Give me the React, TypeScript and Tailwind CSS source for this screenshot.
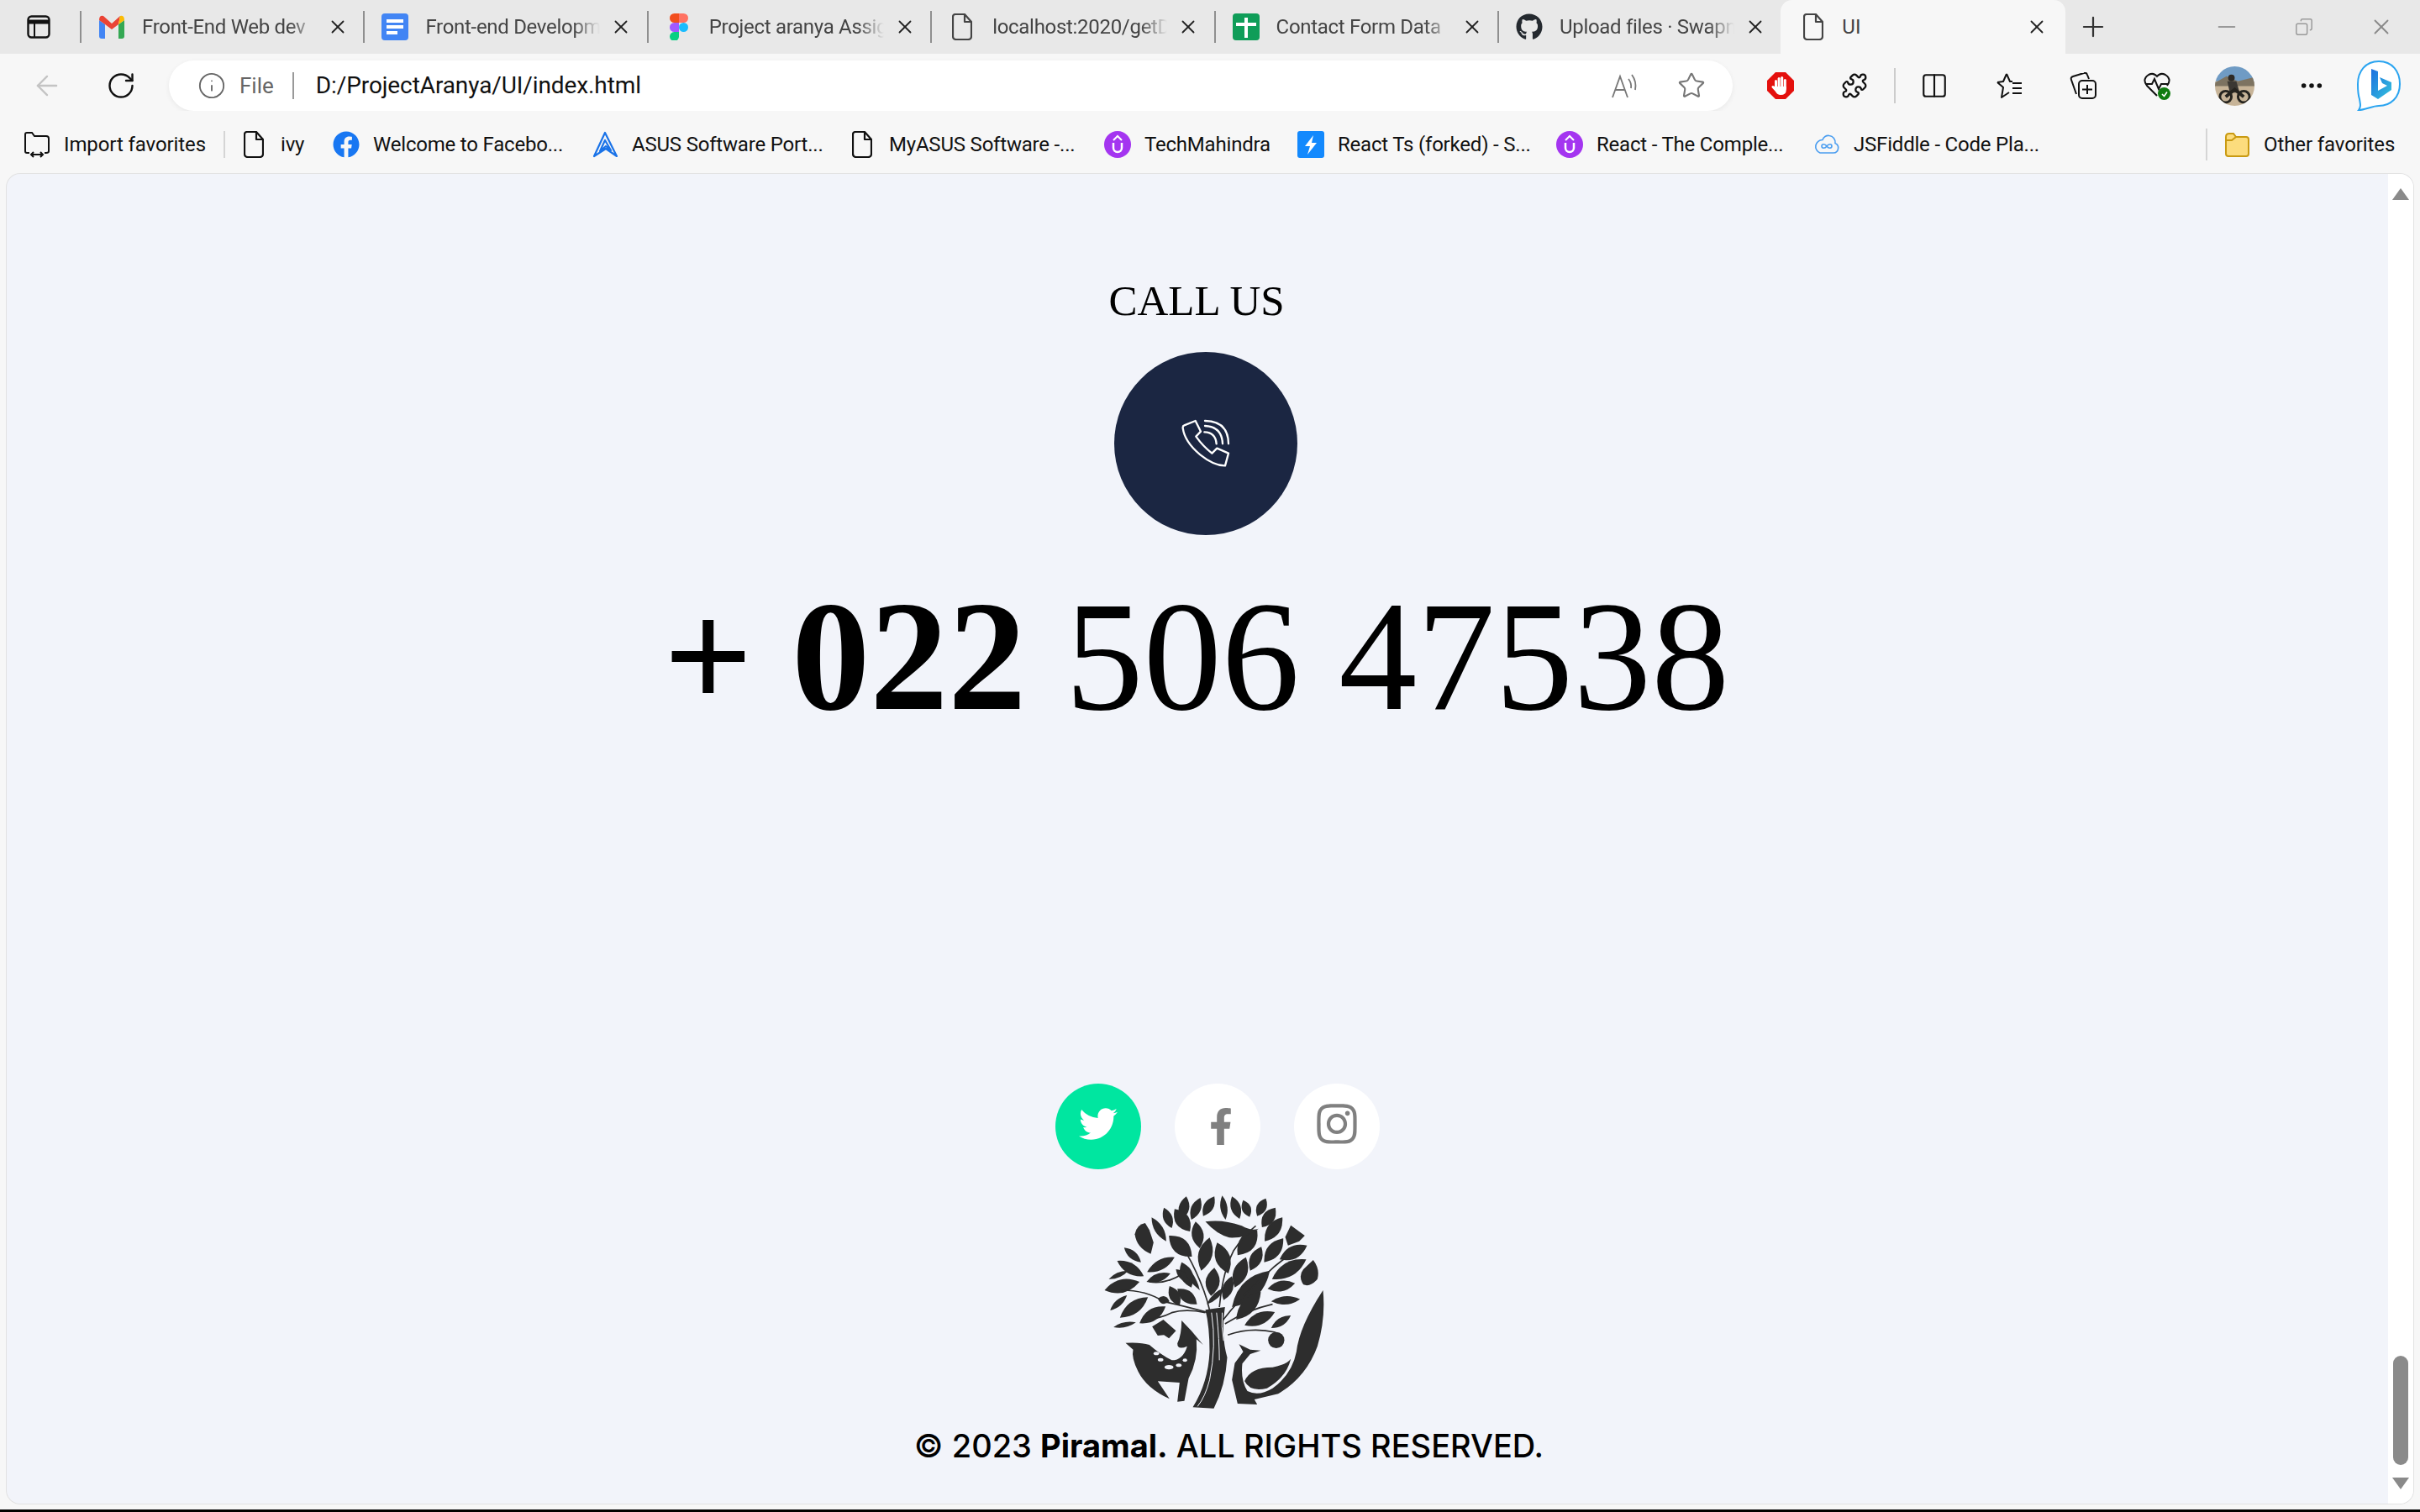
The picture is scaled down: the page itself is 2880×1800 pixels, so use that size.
import React from 'react';
import {
  ArrowLeft,
  RotateCw,
  Info,
  Star,
  Puzzle,
  Columns2,
  Minus,
  Plus,
  X,
  Copy,
  MoreHorizontal,
} from 'lucide-react';
import { FaFacebookF, FaFacebook, FaGithub, FaInstagram, FaTwitter } from 'react-icons/fa';

const uiFont = { fontFamily: 'Roboto, sans-serif' };

const GmailIcon = () => (
  <svg viewBox="0 0 30 28" className="h-[28px] w-[30px]">
    <path d="M0 6 L0 25 Q0 28 3 28 L7 28 L7 11 Z" fill="#4285f4" />
    <path d="M30 6 L30 25 Q30 28 27 28 L23 28 L23 11 Z" fill="#34a853" />
    <path d="M0 6 Q0 0 5 1 L15 10 L25 1 L23 11 L15 17 L7 11 Z" fill="#ea4335" />
    <path d="M25 1 Q30 0 30 6 L23 11 Z" fill="#fbbc04" />
  </svg>
);

const DocsIcon = () => (
  <svg viewBox="0 0 32 32" className="h-[32px] w-[32px]">
    <rect width="32" height="32" rx="4" fill="#4285f4" />
    <rect x="6" y="7" width="20" height="4" fill="#fff" />
    <rect x="6" y="14" width="20" height="4" fill="#fff" />
    <rect x="6" y="21" width="13" height="4" fill="#fff" />
  </svg>
);

const FigmaIcon = () => (
  <svg viewBox="0 0 22 32" className="h-[32px] w-[22px]">
    <path d="M11 0 H5.5 a5.5 5.5 0 0 0 0 11 H11 Z" fill="#f24e1e" />
    <path d="M11 0 h5.5 a5.5 5.5 0 0 1 0 11 H11 Z" fill="#ff7262" />
    <path d="M11 11 H5.5 a5.5 5.5 0 0 0 0 11 H11 Z" fill="#a259ff" />
    <circle cx="16.5" cy="16.5" r="5.5" fill="#1abcfe" />
    <path d="M11 22 H5.5 a5.5 5.5 0 1 0 5.5 5 Z" fill="#0acf83" />
  </svg>
);

const SheetsIcon = () => (
  <svg viewBox="0 0 32 32" className="h-[32px] w-[32px]">
    <rect width="32" height="32" rx="4" fill="#0f9d58" />
    <rect x="14" y="5" width="4" height="24" fill="#fff" />
    <rect x="4" y="11" width="24" height="4" fill="#fff" />
  </svg>
);

const UdemyIcon = () => (
  <svg viewBox="0 0 32 32" className="h-[32px] w-[32px]">
    <circle cx="16" cy="16" r="16" fill="#a435f0" />
    <path d="M11 14 V20 a5 5 0 0 0 10 0 V14" fill="none" stroke="#fff" strokeWidth="2.5" />
    <path d="M11 11 L16 6 L21 11" fill="none" stroke="#fff" strokeWidth="2" />
  </svg>
);

const AsusIcon = () => (
  <svg viewBox="0 0 32 32" className="h-[32px] w-[32px]">
    <path
      d="M16 2 L30 30 L17 21 L3 30 Z M16 11 L10 24 L17 18 L23 23 Z"
      fill="none"
      stroke="#1a73e8"
      strokeWidth="2.2"
      strokeLinejoin="round"
    />
  </svg>
);

const BoltIcon = () => (
  <svg viewBox="0 0 32 32" className="h-[32px] w-[32px]">
    <rect width="32" height="32" rx="3" fill="#1389fd" />
    <path d="M19 5 L9 18 H15 L12 28 L23 14 H17 Z" fill="#fff" />
  </svg>
);

const FiddleIcon = () => (
  <svg viewBox="0 0 32 32" className="h-[32px] w-[32px]">
    <path
      d="M8 26 H24 a6 6 0 0 0 2 -11.5 a8 8 0 0 0 -7 -9 a7 7 0 0 0 -8 5 a8 8 0 0 0 -3 15.5 Z"
      fill="none"
      stroke="#4a9df0"
      strokeWidth="1.6"
    />
    <path
      d="M16 18 c-2 -3 -6 -3 -6 0 s4 3 6 0 s6 -3 6 0 s-4 3 -6 0 Z"
      fill="none"
      stroke="#4a9df0"
      strokeWidth="1.6"
    />
  </svg>
);

const FolderIcon = () => (
  <svg viewBox="0 0 32 32" className="h-[32px] w-[32px]">
    <path
      d="M3 7 Q3 3 7 3 H12 L15 7 H27 Q30 7 30 10 V27 Q30 30 27 30 H6 Q3 30 3 27 Z"
      fill="#fcdc7d"
      stroke="#c99a12"
      strokeWidth="2"
    />
    <path d="M3 11 H10 L15 7" fill="none" stroke="#c99a12" strokeWidth="2" />
  </svg>
);

const ImportIcon = () => (
  <svg viewBox="0 0 32 32" className="h-[32px] w-[32px]" fill="none" stroke="#111" strokeWidth="2">
    <path d="M7 26 H4 Q2 26 2 24 V4 Q2 2 4 2 H10 L13 6 H27 Q30 6 30 9 V24 Q30 26 27 26 H25" />
    <path d="M9 28 H23 M12 25 L9 28 L12 31 M20 25 L23 28 L20 31" />
  </svg>
);

const PageIcon = ({ color = '#111' }: { color?: string }) => (
  <svg viewBox="0 0 24 32" className="h-[32px] w-[24px]" fill="none" stroke={color} strokeWidth="2.2">
    <path d="M4 1 H15 L23 10 V27 Q23 31 19 31 H5 Q1 31 1 27 V4 Q1 1 4 1 Z M15 1 V10 H23" strokeLinejoin="round" />
  </svg>
);

const ReadAloudIcon = () => (
  <svg viewBox="0 0 32 30" className="h-[30px] w-[32px]" fill="none" stroke="#777" strokeWidth="1.8">
    <path d="M2 29 L11 4 L20 29 M5 20 H17" />
    <path d="M21 7 Q25 12 24 18 M25 2 Q31 10 29 20" />
  </svg>
);

const AdBlockIcon = () => (
  <svg viewBox="0 0 32 32" className="h-[32px] w-[32px]">
    <path d="M10 0 H22 L32 10 V22 L22 32 H10 L0 22 V10 Z" fill="#e4100d" />
    <g fill="#fff">
      <rect x="9" y="9" width="3" height="12" rx="1.5" />
      <rect x="12.6" y="6" width="3" height="14" rx="1.5" />
      <rect x="16.2" y="5" width="3" height="15" rx="1.5" />
      <rect x="19.8" y="8" width="3" height="13" rx="1.5" />
      <path d="M9 17 H22.8 V21 Q22.8 27 16 27 Q12 27 10 23 L5.5 18 Q5 16 7 16 Z" />
    </g>
  </svg>
);

const FavListIcon = () => (
  <svg viewBox="0 0 32 32" className="h-[32px] w-[32px]" fill="none" stroke="#111" strokeWidth="2">
    <path d="M13 2 L17 11 H20 M2 12 L9 18 L7 30 L16 24 M13 2 L9 11 L2 12" strokeLinejoin="round" />
    <path d="M20 13 H31 M20 19 H31 M20 25 H31" />
  </svg>
);

const CollectionsIcon = () => (
  <svg viewBox="0 0 32 32" className="h-[32px] w-[32px]" fill="none" stroke="#111" strokeWidth="2">
    <path d="M8 26 L2 9 Q1 6 4 5 L17 1 Q20 0 21 3 L23 8" />
    <rect x="11" y="10" width="20" height="21" rx="4" />
    <path d="M21 15 V26 M15 20.5 H27" />
  </svg>
);

const HeartIcon = () => (
  <div className="relative h-[34px] w-[32px]">
    <svg viewBox="0 0 32 32" className="h-[32px] w-[32px]" fill="none" stroke="#111" strokeWidth="2">
      <path d="M16 29 L4 17 Q-2 9 6 4 Q12 1 16 6 Q20 1 26 4 Q34 9 28 17" />
      <path d="M2 15 H10 L13 9 L18 21 L21 15 H30" />
    </svg>
    <span className="absolute bottom-0 right-0 flex h-[15px] w-[15px] items-center justify-center rounded-full bg-[#107c10]">
      <svg viewBox="0 0 10 10" className="h-[10px] w-[10px]" fill="none" stroke="#fff" strokeWidth="1.6">
        <path d="M2 5 L4.5 7.5 L8 2.5" />
      </svg>
    </span>
  </div>
);

const Avatar = () => (
  <svg viewBox="0 0 48 48" className="h-[47px] w-[47px]">
    <defs>
      <clipPath id="avatar-clip">
        <circle cx="24" cy="24" r="24" />
      </clipPath>
    </defs>
    <g clipPath="url(#avatar-clip)">
      <rect width="48" height="20" fill="#6f9bc4" />
      <rect y="18" width="48" height="30" fill="#c7b498" />
      <path d="M0 20 L14 12 L28 18 L48 13 V24 H0 Z" fill="#7d7361" />
      <circle cx="20" cy="14" r="4" fill="#2d2a26" />
      <path d="M15 18 H26 L30 32 H18 Z" fill="#3b3833" />
      <circle cx="13" cy="37" r="7" fill="none" stroke="#26241f" strokeWidth="3" />
      <circle cx="35" cy="37" r="7" fill="none" stroke="#26241f" strokeWidth="3" />
      <path d="M13 37 L24 28 L35 37" fill="none" stroke="#26241f" strokeWidth="4" />
    </g>
  </svg>
);

const BingIcon = () => (
  <svg viewBox="0 0 52 60" className="h-[60px] w-[52px]">
    <defs>
      <linearGradient id="bing-g" x1="0" y1="0" x2="1" y2="1">
        <stop offset="0" stopColor="#1b6fe0" />
        <stop offset="1" stopColor="#35c3dc" />
      </linearGradient>
    </defs>
    <path
      d="M26 1 C42 1 51 13 51 28 C51 44 40 54 26 54 C18 54 10 59 2 59 C5 55 4 52 3 46 C1 40 1 34 1 28 C1 13 10 1 26 1 Z"
      fill="#fff"
      stroke="#2aa4f0"
      strokeWidth="2"
    />
    <path d="M17 10 L25 13 V36 L36 30 L30 27 L27 20 L41 26 V35 L25 46 L17 41 Z" fill="url(#bing-g)" />
  </svg>
);

const tabs = [
  { title: 'Front-End Web dev', icon: <GmailIcon /> },
  { title: 'Front-end Developm', icon: <DocsIcon /> },
  { title: 'Project aranya Assig', icon: <FigmaIcon /> },
  { title: 'localhost:2020/getD', icon: <PageIcon color="#444" /> },
  { title: 'Contact Form Data', icon: <SheetsIcon /> },
  { title: 'Upload files · Swapn', icon: <FaGithub className="h-[32px] w-[32px] text-[#24292f]" /> },
];

const bookmarks = [
  { label: 'ivy', icon: <PageIcon />, width: 'w-[110px]' },
  { label: 'Welcome to Facebo...', icon: <FaFacebook className="h-[32px] w-[32px] text-[#1877f2]" />, width: 'w-[308px]' },
  { label: 'ASUS Software Port...', icon: <AsusIcon />, width: 'w-[306px]' },
  { label: 'MyASUS Software -...', icon: <PageIcon />, width: 'w-[304px]' },
  { label: 'TechMahindra', icon: <UdemyIcon />, width: 'w-[230px]' },
  { label: 'React Ts (forked) - S...', icon: <BoltIcon />, width: 'w-[308px]' },
  { label: 'React - The Comple...', icon: <UdemyIcon />, width: 'w-[306px]' },
  { label: 'JSFiddle - Code Pla...', icon: <FiddleIcon />, width: 'w-[300px]' },
];

// x1, y1, x2, y2, width: every leaf of the tree, base to tip
const leaves: number[][] = [
  [555, 548, 572, 465, 30], [590, 548, 622, 470, 28], [632, 535, 672, 465, 28], [712, 548, 700, 462, 20],
  [762, 545, 735, 465, 28], [798, 538, 775, 478, 26], [825, 535, 856, 472, 28], [520, 578, 492, 505, 26],
  [500, 625, 448, 540, 24], [585, 590, 530, 510, 40], [592, 680, 510, 605, 44], [620, 650, 605, 555, 34],
  [842, 575, 890, 505, 34], [852, 625, 915, 540, 36], [755, 675, 825, 585, 46], [850, 700, 918, 615, 38],
  [800, 730, 840, 645, 34], [905, 690, 1003, 640, 36], [878, 760, 1000, 690, 40], [625, 730, 655, 612, 40],
  [722, 740, 682, 630, 42], [745, 790, 785, 682, 40], [660, 820, 672, 720, 40], [705, 835, 735, 750, 30],
  [735, 860, 870, 730, 52], [750, 905, 838, 805, 40], [780, 925, 888, 878, 34], [862, 795, 960, 775, 30],
  [875, 840, 978, 832, 24], [875, 935, 945, 890, 22], [590, 790, 555, 700, 36], [620, 800, 555, 700, 18],
  [580, 770, 535, 725, 20], [610, 850, 540, 795, 34], [548, 855, 512, 785, 30], [432, 735, 530, 682, 28],
  [420, 750, 325, 695, 30], [410, 700, 350, 648, 22], [280, 800, 405, 770, 38], [295, 760, 365, 730, 14],
  [300, 872, 360, 818, 18], [335, 898, 435, 825, 34], [405, 918, 498, 858, 34], [470, 830, 512, 840, 22],
  [312, 932, 392, 915, 14], [430, 770, 515, 740, 24], [645, 850, 710, 790, 16],
];

const leafPath = ([x1, y1, x2, y2, w]: number[]) => {
  const mx = (x1 + x2) / 2;
  const my = (y1 + y2) / 2;
  const len = Math.hypot(x2 - x1, y2 - y1);
  const nx = ((y2 - y1) / len) * w * 1.25;
  const ny = (-(x2 - x1) / len) * w * 1.25;
  return `M${x1} ${y1} Q${mx + nx} ${my + ny} ${x2} ${y2} Q${mx - nx} ${my - ny} ${x1} ${y1} Z`;
};

const TreeLogo = () => (
  <svg viewBox="270 455 800 780" className="ml-[40px] mt-[29px] h-[260px] w-[267px] shrink-0" fill="#2d2d2d">
    {leaves.map((leaf, i) => (
      <path key={i} d={leafPath(leaf)} />
    ))}
    {/* tulips and fruit */}
    <path d="M445 670 Q395 650 388 600 Q395 565 425 560 L440 585 L455 630 Z" />
    <path d="M640 555 Q700 545 770 570 Q805 590 830 580 Q790 615 725 612 Q680 600 640 555 Z" />
    <path d="M925 610 L945 568 L995 605 L975 625 L935 640 Z" />
    <path d="M1025 692 Q1050 725 1040 760 Q1015 790 990 780 Q970 750 990 725 Z" />
    <path d="M450 930 L490 905 L535 945 L510 972 L492 960 L470 962 Z" />
    <circle cx="893" cy="978" r="29" />
    {/* trunk and branches */}
    <path d="M595 1218 Q650 1130 655 1020 Q655 930 640 870 L710 860 Q695 960 718 1040 Q712 1140 670 1222 Z" />
    <g fill="none" stroke="#2d2d2d" strokeWidth="5">
      <path d="M660 900 Q650 820 590 700 Q560 640 520 610" />
      <path d="M650 880 Q580 860 490 840 Q430 800 340 800" />
      <path d="M640 880 Q570 865 520 880 Q480 900 430 905" />
      <path d="M700 910 Q770 820 860 740 Q920 680 990 650" />
      <path d="M710 920 Q790 870 880 850" />
      <path d="M720 960 Q800 930 890 950" />
      <path d="M690 860 Q700 740 740 660 Q780 600 820 570" />
      <path d="M440 770 Q500 780 560 740" />
    </g>
    <g fill="none" stroke="#f2f4fa" strokeWidth="3">
      <path d="M662 880 Q680 1000 655 1120 Q640 1180 612 1215" />
      <path d="M680 880 Q690 980 690 1050" />
      <path d="M700 880 Q696 930 705 980" />
    </g>
    {/* deer */}
    <path d="M355 988 Q410 985 440 995 Q480 1030 520 1050 Q560 1050 575 1000 Q540 1015 540 990 Q555 960 555 908 L590 945 L632 995 L608 975 Q615 1050 580 1115 L565 1195 L540 1198 L548 1130 L470 1125 L512 1188 Q430 1150 400 1090 Q375 1040 382 1012 Z" />
    <g fill="#f2f4fa">
      <ellipse cx="465" cy="1026" rx="10" ry="6" />
      <ellipse cx="480" cy="1048" rx="10" ry="6" />
      <ellipse cx="510" cy="1075" rx="16" ry="8" />
      <ellipse cx="545" cy="1068" rx="10" ry="6" />
      <ellipse cx="567" cy="1050" rx="8" ry="6" />
    </g>
    {/* bird and the crescent round it */}
    <path d="M760 993 L800 1012 L838 1015 L800 1028 L772 1062 Q765 1120 790 1160 Q830 1180 880 1150 Q950 1100 965 1020 Q975 930 1060 800 Q1070 900 1040 1000 Q1000 1110 900 1170 L815 1190 L825 1208 L755 1205 L735 1120 L745 1060 L775 1020 Z" />
    <path d="M780 1125 Q800 1075 880 1075 Q930 1065 945 1045 Q930 1110 860 1150 Q800 1165 780 1125 Z" />
  </svg>
);

const PhoneGlyph = () => (
  <svg
    viewBox="375 595 180 180"
    className="h-[60px] w-[60px]"
    fill="none"
    stroke="#fff"
    strokeWidth="7"
    strokeLinecap="round"
    strokeLinejoin="round"
  >
    <path d="M388 620 L428 604 L447 642 L430 660 Q455 695 487 720 L505 702 L546 720 L534 764 Q495 765 445 725 Q390 680 383 630 Q382 622 388 620 Z" />
    <path d="M462 604 Q545 605 546 686" />
    <path d="M462 622 Q523 625 525 686" />
    <path d="M460 644 Q500 645 503 686" />
  </svg>
);

export default function App() {
  return (
    <div className="flex h-screen w-full flex-col overflow-hidden bg-black" style={uiFont}>
      {/* tab strip */}
      <div className="flex h-[64px] shrink-0 items-center bg-[#e8e8e8]">
        <div className="flex w-[95px] shrink-0 justify-center pr-[3px]">
          <svg viewBox="0 0 28 28" className="h-[28px] w-[28px]" fill="none" stroke="#111" strokeWidth="2.4">
            <rect x="1.5" y="1.5" width="25" height="25" rx="4" />
            <path d="M1.5 8 H26.5" strokeWidth="5" />
            <path d="M9 8 V26" strokeWidth="2" />
          </svg>
        </div>
        {tabs.map((tab) => (
          <div key={tab.title} className="flex h-[38px] w-[337.4px] shrink-0 items-center border-l-2 border-[#8f8f8f] pl-[20px]">
            <div className="flex w-[32px] shrink-0 justify-center">{tab.icon}</div>
            <span className="ml-[20px] w-[208px] shrink-0 overflow-hidden whitespace-nowrap text-[24px] tracking-[-0.3px] text-[#444] [mask-image:linear-gradient(to_right,black_85%,transparent)]">
              {tab.title}
            </span>
            <X className="ml-[12px] h-[26px] w-[26px] shrink-0 text-[#222]" strokeWidth={1.7} />
          </div>
        ))}
        <div className="flex h-[64px] w-[339px] shrink-0 items-center rounded-t-[14px] bg-[#f7f7f7] pl-[27px]">
          <PageIcon color="#444" />
          <span className="ml-[22px] w-[219px] text-[24px] text-[#444]">UI</span>
          <X className="h-[26px] w-[26px] text-[#222]" strokeWidth={1.7} />
        </div>
        <Plus className="ml-[14px] h-[38px] w-[38px] text-[#333]" strokeWidth={1.4} />
        <Minus className="ml-[124px] h-[32px] w-[32px] text-[#999]" strokeWidth={1.5} />
        <Copy className="ml-[65px] h-[22px] w-[22px] -scale-x-100 text-[#999]" strokeWidth={1.6} />
        <X className="ml-[66px] h-[30px] w-[30px] text-[#8a8a8a]" strokeWidth={1.5} />
      </div>

      {/* address row */}
      <div className="flex h-[68px] shrink-0 items-center bg-[#f7f7f7] pt-[8px]">
        <ArrowLeft className="ml-[37px] h-[38px] w-[38px] text-[#c4c4c4]" strokeWidth={1.5} />
        <RotateCw className="ml-[51px] h-[36px] w-[36px] text-[#111]" strokeWidth={1.6} />
        <div className="ml-[39px] flex h-[60px] w-[1861px] shrink-0 items-center rounded-full bg-white pl-[34px] shadow-[0_2px_6px_rgba(0,0,0,0.06)]">
          <Info className="h-[34px] w-[34px] text-[#666]" strokeWidth={1.3} />
          <span className="ml-[16px] text-[26px] text-[#666]">File</span>
          <span className="ml-[22px] h-[32px] w-[2px] bg-[#999]" />
          <span className="ml-[26px] text-[28px] tracking-[-0.1px] text-[#111]">D:/ProjectAranya/UI/index.html</span>
          <span className="ml-auto">
            <ReadAloudIcon />
          </span>
          <Star className="ml-[47px] mr-[32px] h-[34px] w-[34px] text-[#777]" strokeWidth={1.5} />
        </div>
        <div className="ml-[41px]">
          <AdBlockIcon />
        </div>
        <Puzzle className="ml-[56px] h-[32px] w-[32px] text-[#111]" strokeWidth={1.7} />
        <span className="ml-[31px] h-[42px] w-[2px] bg-[#ccc]" />
        <Columns2 className="ml-[29px] h-[34px] w-[34px] text-[#111]" strokeWidth={1.5} />
        <div className="ml-[56px]">
          <FavListIcon />
        </div>
        <div className="ml-[56px]">
          <CollectionsIcon />
        </div>
        <div className="ml-[56px]">
          <HeartIcon />
        </div>
        <div className="ml-[53px]">
          <Avatar />
        </div>
        <MoreHorizontal className="ml-[52px] h-[32px] w-[32px] text-[#111]" strokeWidth={2.2} />
        <div className="ml-[38px]">
          <BingIcon />
        </div>
      </div>

      {/* favorites bar */}
      <div className="flex h-[75px] shrink-0 items-center bg-[#f7f7f7] pt-[4px]">
        <div className="ml-[28px] flex w-[238px] shrink-0 items-center">
          <ImportIcon />
          <span className="ml-[16px] whitespace-nowrap text-[24px] tracking-[-0.1px] text-[#111]">Import favorites</span>
        </div>
        <span className="h-[32px] w-[2px] shrink-0 bg-[#d5d5d5]" />
        <div className="ml-[18px] flex">
          {bookmarks.map((b, i) => (
            <div key={i} className={`flex shrink-0 items-center ${b.width}`}>
              <div className="flex w-[32px] shrink-0 justify-center">{b.icon}</div>
              <span className="ml-[16px] whitespace-nowrap text-[24px] tracking-[-0.2px] text-[#111]">{b.label}</span>
            </div>
          ))}
        </div>
        <span className="ml-auto h-[38px] w-[2px] shrink-0 bg-[#d5d5d5]" />
        <div className="flex w-[253px] shrink-0 items-center pl-[19px]">
          <FolderIcon />
          <span className="ml-[16px] whitespace-nowrap text-[24px] tracking-[-0.1px] text-[#111]">Other favorites</span>
        </div>
      </div>

      {/* page and scrollbar */}
      <div className="mb-[3px] flex min-h-0 flex-1 bg-[#f7f7f7] pb-[7px] pl-[8px] pr-[8px]">
        <div className="flex min-h-0 flex-1 overflow-hidden rounded-[16px] bg-[#f2f4fa] shadow-[0_0_0_1px_#e2e2e2]">
          <main className="flex flex-1 flex-col items-center pr-[2px] pt-[122px]">
            <h2 className="text-[51px] leading-[58px] text-black" style={{ fontFamily: '"Liberation Serif", serif' }}>
              CALL US
            </h2>
            <div className="ml-[22px] mt-[32px] flex h-[218px] w-[218px] shrink-0 items-center justify-center rounded-full bg-[#1b2642]">
              <PhoneGlyph />
            </div>
            <p
              className="mt-[37px] whitespace-nowrap text-[186px] leading-[214px] text-black"
              style={{ fontFamily: '"Liberation Serif", serif' }}
            >
              <b>+ 022</b> 506 47538
            </p>
            <div className="ml-[50px] mt-[402px] flex gap-[40px]">
              <span className="flex h-[102px] w-[102px] items-center justify-center rounded-full bg-[#00e6a0]">
                <FaTwitter className="-mt-[6px] h-[46px] w-[46px] text-white" />
              </span>
              <span className="flex h-[102px] w-[102px] items-center justify-center rounded-full bg-white">
                <FaFacebookF className="ml-[8px] h-[44px] w-[44px] text-[#808080]" />
              </span>
              <span className="flex h-[102px] w-[102px] items-center justify-center rounded-full bg-white">
                <FaInstagram className="-mt-[6px] h-[54px] w-[54px] text-[#808080]" />
              </span>
            </div>
            <TreeLogo />
            <p
              className="ml-[77px] mt-[16px] whitespace-nowrap text-[38px] font-medium leading-[48px] text-black"
              style={{ fontFamily: 'Inter, sans-serif' }}
            >
              © 2023 <b className="font-bold">Piramal.</b> ALL RIGHTS RESERVED.
            </p>
          </main>
          <aside className="relative w-[30px] shrink-0 bg-white">
            <span className="absolute left-[5px] top-[17px] h-0 w-0 border-x-[10px] border-b-[14px] border-x-transparent border-b-[#8a8a8a]" />
            <span className="absolute bottom-[46px] left-[6px] h-[130px] w-[18px] rounded-full bg-[#8a8a8a]" />
            <span className="absolute bottom-[17px] left-[5px] h-0 w-0 border-x-[10px] border-t-[14px] border-x-transparent border-t-[#8a8a8a]" />
          </aside>
        </div>
      </div>
    </div>
  );
}
